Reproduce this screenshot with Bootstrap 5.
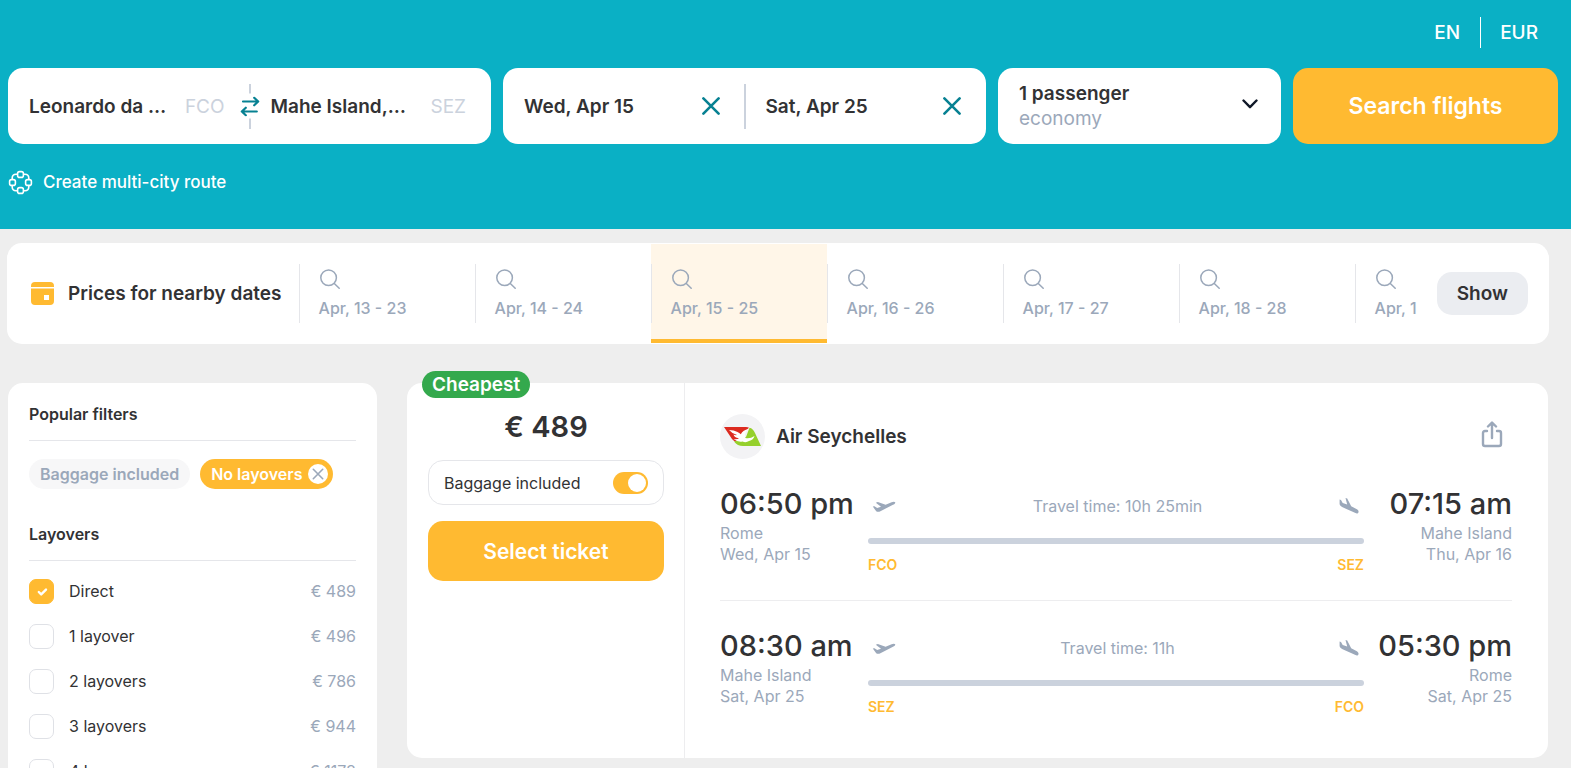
<!DOCTYPE html>
<html lang="en">
<head>
<meta charset="utf-8">
<meta name="viewport" content="width=device-width, initial-scale=1">
<title>Flights Rome – Mahe Island</title>
<link href="https://cdn.jsdelivr.net/npm/bootstrap@5.3.0/dist/css/bootstrap.min.css" rel="stylesheet">
<style>
  :root { --teal: #0ab0c5; --deep: #078192; --amber: #ffba31; --ink: #323234; --muted: #9ba8ba; --pale: #cbd2dd; --line: #e5e6ea; }
  body { font-family: Inter, "Liberation Sans", sans-serif; font-size: 16px; line-height: 21px; color: var(--ink); background: #eee; }
  svg { display: block; flex: none; }
  .t-muted { color: var(--muted); }
  .t-19 { font-size: 19px; line-height: 25px; }
  .t-21 { font-size: 21px; }
  .t-23 { font-size: 23px; }
  .w-med { font-weight: 500; }
  .w-semi { font-weight: 600; }
  .bare { background: none; border: 0; padding: 0; color: inherit; }
  .panel { background: #fff; border-radius: 15px; }
  .cta { background: var(--amber); color: #fff; border: 0; border-radius: 15px; }

  /* search header */
  .top-area { background: var(--teal); padding: 0 13px 0 8px; height: 229px; }
  .locale { height: 68px; padding-top: 17px; padding-bottom: 20px; }
  .locale button { padding: 0 20px; color: #fff; }
  .locale button + button { border-left: 1px solid #fff; padding-left: 19px; }
  .search-grid { display: grid; grid-template-columns: 483fr 483fr 283fr 265fr; gap: 12px; height: 76px; }
  .half { width: 50%; min-width: 0; padding: 0 25px 0 21px; }
  .half input { min-width: 0; width: 100%; outline: 0; }
  .code { color: var(--pale); font-size: 19px; }
  .split { width: 2px; height: 45px; background: var(--pale); margin: 0 -1px; }
  .swap { position: absolute; left: 50%; top: 50%; transform: translate(-50%, -50%); background: #fff; height: 25px; }
  .pax { padding: 0 23px 0 21px; }
  .multi { color: #fff; margin-top: 26px; font-size: 17px; gap: 10px; }

  /* nearby dates */
  .dates { margin: 14px 22px 0 7px; height: 101px; padding: 1px 21px 1px 24px; }
  .lead-in { padding: 0 17px 0 14px; }
  .cells { margin-right: 19px; }
  .date-cell { flex: 0 0 176px; background: none; border: 0; padding: 0; }
  .date-cell > span { display: block; width: 100%; height: 59px; border-left: 1px solid var(--line); padding: 5px 0 0 19px; text-align: left; }
  .date-cell.chosen { background: #fff6e8; border-bottom: 4px solid var(--amber); padding-top: 4px; }
  .date-cell svg { margin: 0 0 9px 1px; }
  .show-btn { background: #ebedf1; color: inherit; border: 0; border-radius: 15px; padding: 9px 20px; }

  /* filters */
  .results { padding: 39px 23px 0 8px; gap: 30px; }
  .filters { flex: 0 0 369px; padding: 21px 21px 20px; }
  .filters h2 { font-size: 16px; line-height: 21px; margin: 0; padding-bottom: 15px; border-bottom: 1px solid var(--line); }
  .chips { gap: 10px; padding: 18px 0 35px; }
  .chip { height: 30px; border: 0; border-radius: 15px; padding: 0 11px; color: var(--muted); background: #f7f7f8; }
  .chip.on { background: var(--amber); color: #fff; padding-right: 5px; gap: 6px; }
  .opts { padding-top: 8px; }
  .opt { height: 45px; }
  .opt label { padding-left: 15px; }
  .opt .form-check-input[type=checkbox] { width: 25px; height: 25px; margin: 0; border: 1px solid #dfe1e6; border-radius: 7px; }
  .opt .form-check-input:checked { background-color: var(--amber); border-color: var(--amber); background-size: 16px; }

  /* ticket */
  .ticket { min-height: 375px; }
  .cheap { position: absolute; left: 15px; top: -12px; background: #34a94d; color: #fff; border-radius: 14px; padding: 1px 10px; }
  .buy { flex: 0 0 278px; border-right: 1px solid #ededef; padding: 24px 20px 0 21px; }
  .price { font-size: 29px; line-height: 40px; }
  .bag { height: 45px; margin-top: 13px; border: 1px solid var(--line); border-radius: 15px; padding: 1px 15px 0; }
  .bag .form-check-input { width: 35px; height: 22px; margin: 0; border: 0; border-radius: 11px; background-color: var(--amber); }
  .form-switch.bag .form-check-input:checked { background-color: var(--amber); background-size: 22px; background-position: right center;
    background-image: url("data:image/svg+xml,%3csvg xmlns='http://www.w3.org/2000/svg' viewBox='-11 -11 22 22'%3e%3ccircle r='9' fill='%23fff'/%3e%3c/svg%3e"); }
  .pick { height: 60px; margin-top: 16px; }
  .trip { padding: 31px 36px 0 35px; }
  .logo { width: 45px; height: 45px; border-radius: 50%; background: #f3f3f5; }
  .airline { padding-left: 11px; }
  .share { margin: 0 9px 4px 0; }
  .leg { height: 141px; padding-top: 25px; gap: 3px; }
  .leg + .leg { border-top: 1px solid #ededef; }
  .end { flex: 0 0 145px; padding-top: 1px; }
  .clock { font-size: 29px; line-height: 37px; margin-bottom: 1px; white-space: nowrap; }
  .sky { height: 44px; padding: 0 5px 0 4px; margin-bottom: 10px; }
  .track { height: 6px; border-radius: 3px; background: var(--pale); }
  .iata { color: var(--amber); font-size: 14px; padding-top: 10px; }
</style>
</head>
<body class="vh-100 overflow-hidden">

<svg width="0" height="0" class="position-absolute" aria-hidden="true">
  <symbol id="lens" viewBox="0 0 20 20"><g fill="none" stroke="#9ba8ba" stroke-width="1.5" stroke-linecap="round"><circle cx="8.6" cy="8.8" r="7.8"/><path d="M14.3 14.5 19.2 19.3"/></g></symbol>
  <symbol id="close" viewBox="0 0 18 18"><path d="M1.4 1.4 16.6 16.6M16.6 1.4 1.4 16.6" fill="none" stroke="#078192" stroke-width="2.6" stroke-linecap="round"/></symbol>
  <symbol id="takeoff" viewBox="0 0 24 14"><path d="M.8 7.6 2.4 7.2 5.2 8.9 9 7.8 3.8 3.8 5.8 3.1 13.6 5.7 19.6 3.2C21 2.6 22.8 2.5 23.2 3.3 23.6 4.3 22.2 5.2 21 5.8L8.4 12.2C7 12.9 5.3 13 4.2 12.2Z" fill="#9ba8ba"/></symbol>
  <symbol id="landing" viewBox="0 0 20 18"><path d="M.6 2.4 2 2.9 3.7 6.1 8.2 7.6 6.5 1 8.2 1.6 12.2 9.2 17.9 12.3C19.2 13.1 19.8 14.2 19.5 15.2 19.1 16.6 17.7 16.6 16.5 16.1L3.6 10.3C1.8 9.5.8 8.4.6 7.1Z" fill="#9ba8ba"/></symbol>
</svg>

<header class="top-area">
  <div class="locale d-flex justify-content-end">
    <button type="button" class="bare t-19 w-med">EN</button>
    <button type="button" class="bare t-19 w-med">EUR</button>
  </div>
  <form class="search-grid">
    <div class="panel position-relative d-flex align-items-center">
      <div class="half d-flex align-items-center">
        <input class="bare t-19 w-semi" aria-label="From" value="Leonardo da …"><span class="code">FCO</span>
      </div>
      <div class="split"></div>
      <div class="half d-flex align-items-center">
        <input class="bare t-19 w-semi" aria-label="To" value="Mahe Island,…"><span class="code">SEZ</span>
      </div>
      <button type="button" class="bare swap" aria-label="Swap airports">
        <svg width="20" height="20" viewBox="0 0 20 20" fill="none" stroke="#078192" stroke-width="2.2" stroke-linecap="round" stroke-linejoin="round"><path d="M3 5H18M14.2 1.2 18.2 5 14.2 8.8M16.8 15H1.8M5.8 11.2 1.8 15 5.8 18.8"/></svg>
      </button>
    </div>
    <div class="panel d-flex align-items-center">
      <div class="half d-flex align-items-center">
        <input class="bare t-19 w-semi" aria-label="Departure" value="Wed, Apr 15">
        <button type="button" class="bare" aria-label="Clear departure"><svg width="18" height="18"><use href="#close"/></svg></button>
      </div>
      <div class="split"></div>
      <div class="half d-flex align-items-center">
        <input class="bare t-19 w-semi" aria-label="Return" value="Sat, Apr 25">
        <button type="button" class="bare" aria-label="Clear return"><svg width="18" height="18"><use href="#close"/></svg></button>
      </div>
    </div>
    <button type="button" class="bare panel pax d-flex align-items-center justify-content-between text-start t-19">
      <span><span class="d-block w-semi">1 passenger</span><span class="d-block t-muted">economy</span></span>
      <svg width="16" height="14" viewBox="0 0 16 14" fill="none" stroke="#101828" stroke-width="2.4" stroke-linecap="round" stroke-linejoin="round"><path d="M1.5 1.5 8 8.2 14.5 1.5"/></svg>
    </button>
    <button type="submit" class="cta w-semi t-23">Search flights</button>
  </form>
  <a href="#" class="multi w-med d-inline-flex align-items-center text-decoration-none">
    <svg width="25" height="25" viewBox="0 0 25 25" fill="none" stroke="#fff" stroke-width="1.6"><rect x="9.6" y="1.6" width="5.8" height="5.8" rx="2"/><rect x="9.6" y="17.6" width="5.8" height="5.8" rx="2"/><rect x="1.6" y="9.6" width="5.8" height="5.8" rx="2"/><rect x="17.6" y="9.6" width="5.8" height="5.8" rx="2"/><path d="M9.6 4.2H8Q4.3 4.3 4.2 8V9.6M15.4 4.2H17Q20.7 4.3 20.8 8V9.6M9.6 20.8H8Q4.3 20.7 4.2 17V15.4M15.4 20.8H17Q20.7 20.7 20.8 17V15.4"/></svg>
    Create multi-city route
  </a>
</header>

<section class="dates panel d-flex align-items-center">
  <svg width="23" height="23" viewBox="0 0 23 23"><path fill="#ffba31" d="M4 0H19Q23 0 23 4V5H0V4Q0 0 4 0ZM0 6.5H23V19Q23 23 19 23H4Q0 23 0 19ZM13 13V18H18V13Z" fill-rule="evenodd"/></svg>
  <h2 class="t-19 w-semi m-0 text-nowrap lead-in">Prices for nearby dates</h2>
  <div class="d-flex align-items-stretch flex-fill overflow-hidden h-100 cells">
    <button type="button" class="date-cell w-med t-muted"><span><svg width="20" height="20"><use href="#lens"/></svg>Apr, 13 - 23</span></button>
    <button type="button" class="date-cell w-med t-muted"><span><svg width="20" height="20"><use href="#lens"/></svg>Apr, 14 - 24</span></button>
    <button type="button" class="date-cell chosen w-med t-muted"><span><svg width="20" height="20"><use href="#lens"/></svg>Apr, 15 - 25</span></button>
    <button type="button" class="date-cell w-med t-muted"><span><svg width="20" height="20"><use href="#lens"/></svg>Apr, 16 - 26</span></button>
    <button type="button" class="date-cell w-med t-muted"><span><svg width="20" height="20"><use href="#lens"/></svg>Apr, 17 - 27</span></button>
    <button type="button" class="date-cell w-med t-muted"><span><svg width="20" height="20"><use href="#lens"/></svg>Apr, 18 - 28</span></button>
    <button type="button" class="date-cell w-med t-muted"><span><svg width="20" height="20"><use href="#lens"/></svg>Apr, 1</span></button>
  </div>
  <button type="button" class="show-btn t-19 w-semi">Show</button>
</section>

<main class="results d-flex align-items-start">
  <aside class="filters panel">
    <h2 class="w-semi">Popular filters</h2>
    <div class="d-flex chips">
      <button type="button" class="chip w-semi">Baggage included</button>
      <button type="button" class="chip on w-semi d-flex align-items-center">No layovers
        <svg width="20" height="20" viewBox="0 0 20 20"><circle cx="10" cy="10" r="10" fill="#fff"/><path d="M5.3 5.3 14.7 14.7M14.7 5.3 5.3 14.7" stroke="#9ba8ba" stroke-width="1.6" stroke-linecap="round"/></svg>
      </button>
    </div>
    <h2 class="w-semi">Layovers</h2>
    <div class="opts">
      <div class="opt d-flex align-items-center"><input class="form-check-input" type="checkbox" id="l0" checked><label class="flex-fill" for="l0">Direct</label><span class="t-muted">€ 489</span></div>
      <div class="opt d-flex align-items-center"><input class="form-check-input" type="checkbox" id="l1"><label class="flex-fill" for="l1">1 layover</label><span class="t-muted">€ 496</span></div>
      <div class="opt d-flex align-items-center"><input class="form-check-input" type="checkbox" id="l2"><label class="flex-fill" for="l2">2 layovers</label><span class="t-muted">€ 786</span></div>
      <div class="opt d-flex align-items-center"><input class="form-check-input" type="checkbox" id="l3"><label class="flex-fill" for="l3">3 layovers</label><span class="t-muted">€ 944</span></div>
      <div class="opt d-flex align-items-center"><input class="form-check-input" type="checkbox" id="l4"><label class="flex-fill" for="l4">4 layovers</label><span class="t-muted">€ 1178</span></div>
    </div>
  </aside>

  <article class="ticket panel position-relative d-flex flex-fill">
    <span class="cheap t-19 w-semi">Cheapest</span>
    <div class="buy">
      <div class="price w-semi text-center">€ 489</div>
      <div class="bag form-switch d-flex align-items-center justify-content-between">
        <label for="bag">Baggage included</label>
        <input class="form-check-input" type="checkbox" role="switch" id="bag" checked>
      </div>
      <button type="button" class="cta w-100 w-semi t-21 pick">Select ticket</button>
    </div>
    <div class="trip flex-fill">
      <div class="d-flex align-items-center">
        <span class="logo d-flex align-items-center justify-content-center">
          <svg width="37" height="19" viewBox="0 0 37 19"><path fill="#dc2a20" d="M0 0H22Q24 0 25 .8L17 8 14 16.5Q10 14.5 8 12Z"/><path fill="#95d02c" d="M25.5 .8Q29 1.5 31 6L37 19H19Q13.500 19 10 14.500L16 13 22 10Z"/><path fill="#fff" d="M5 3Q10 3 13.500 5Q16 6.300 16.800 7.200Q19 3 24.500 2Q21.500 4.500 21 7.500Q20.800 10 21.500 11Q26 12 30.500 9Q29.500 13 25 14Q22 16 18.500 14.500Q14 15.500 9.500 12Q13.500 12.500 15 11.200Q10 10.500 9.500 7.500Q11.500 8.500 13 8Q8 6.500 5 3Z"/></svg>
        </span>
        <span class="t-19 w-semi flex-fill airline">Air Seychelles</span>
        <button type="button" class="bare share" aria-label="Share"><svg width="22" height="27" viewBox="0 0 22 27" fill="none" stroke="#9ba8ba" stroke-width="2.4" stroke-linecap="round" stroke-linejoin="round"><path d="M6 10H4Q2 10 2 12V23Q2 25 4 25H18Q20 25 20 23V12Q20 10 18 10H16M11 17V2M7 5.5 11 1.5 15 5.5"/></svg></button>
      </div>

      <div class="leg d-flex">
        <div class="end"><div class="clock w-med">06:50 pm</div><div class="t-muted">Rome</div><div class="t-muted">Wed, Apr 15</div></div>
        <div class="flex-fill">
          <div class="d-flex align-items-center justify-content-between sky">
            <svg width="24" height="14"><use href="#takeoff"/></svg><span class="t-muted">Travel time: 10h 25min</span><svg width="20" height="18"><use href="#landing"/></svg>
          </div>
          <div class="track"></div>
          <div class="iata w-semi d-flex justify-content-between"><span>FCO</span><span>SEZ</span></div>
        </div>
        <div class="end text-end"><div class="clock w-med">07:15 am</div><div class="t-muted">Mahe Island</div><div class="t-muted">Thu, Apr 16</div></div>
      </div>
      <div class="leg d-flex">
        <div class="end"><div class="clock w-med">08:30 am</div><div class="t-muted">Mahe Island</div><div class="t-muted">Sat, Apr 25</div></div>
        <div class="flex-fill">
          <div class="d-flex align-items-center justify-content-between sky">
            <svg width="24" height="14"><use href="#takeoff"/></svg><span class="t-muted">Travel time: 11h</span><svg width="20" height="18"><use href="#landing"/></svg>
          </div>
          <div class="track"></div>
          <div class="iata w-semi d-flex justify-content-between"><span>SEZ</span><span>FCO</span></div>
        </div>
        <div class="end text-end"><div class="clock w-med">05:30 pm</div><div class="t-muted">Rome</div><div class="t-muted">Sat, Apr 25</div></div>
      </div>
    </div>
  </article>
</main>
<script src="https://cdn.jsdelivr.net/npm/bootstrap@5.3.0/dist/js/bootstrap.bundle.min.js"></script>
</body>
</html>
